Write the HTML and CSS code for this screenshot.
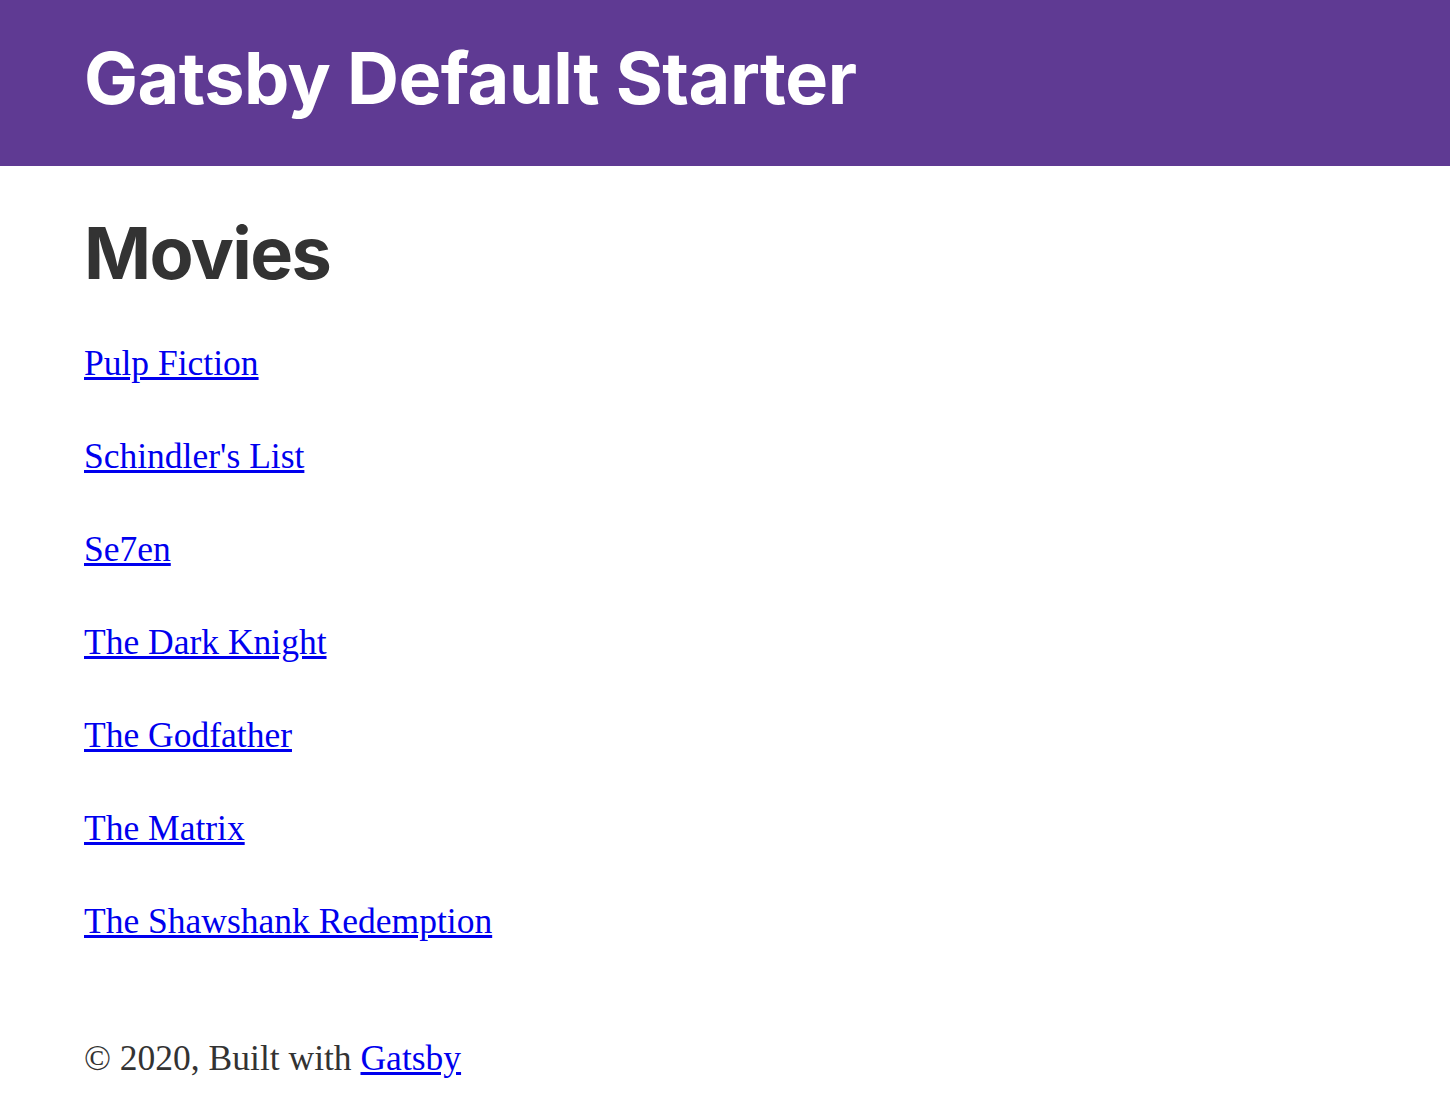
FILE: index.html
```html
<!DOCTYPE html>
<html lang="en">
<head>
<meta charset="utf-8">
<title>Gatsby Default Starter</title>
<link rel="stylesheet" href="styles.css">
</head>
<body>
<header class="site-header">
  <h1 class="site-title">Gatsby Default Starter</h1>
</header>
<div class="page">
  <main class="content">
    <h2 class="page-title">Movies</h2>
    <ul class="movie-list">
      <li class="movie"><a href="#">Pulp Fiction</a></li>
      <li class="movie"><a href="#">Schindler's List</a></li>
      <li class="movie"><a href="#">Se7en</a></li>
      <li class="movie"><a href="#">The Dark Knight</a></li>
      <li class="movie"><a href="#">The Godfather</a></li>
      <li class="movie"><a href="#">The Matrix</a></li>
      <li class="movie"><a href="#">The Shawshank Redemption</a></li>
    </ul>
  </main>
  <footer class="site-footer">© 2020, Built with <a href="#">Gatsby</a></footer>
</div>
</body>
</html>
```
FILE: styles.css
```css
html, body {
  margin: 0;
  padding: 0;
  background: #ffffff;
}
body {
  font-family: "Liberation Serif", serif;
  font-size: 35.5px;
  color: #333333;
}
a {
  color: #0000ee;
  text-decoration: underline;
}
.site-header {
  background: #5f3a93;
  height: 166px;
  box-sizing: border-box;
  padding: 42px 84px 0;
}
.site-title {
  margin: 0;
  font-family: Inter, "Liberation Sans", sans-serif;
  font-weight: 700;
  font-size: 72px;
  line-height: 72px;
  letter-spacing: -0.5px;
  color: #ffffff;
}
.page {
  padding: 51px 84px 0;
  display: flex;
  flex-direction: column;
}
.page-title {
  margin: 0;
  font-family: Inter, "Liberation Sans", sans-serif;
  font-weight: 700;
  font-size: 72px;
  line-height: 72px;
  letter-spacing: -1.6px;
  color: #333333;
}
.movie-list {
  list-style: none;
  margin: 48px 0 0;
  padding: 0;
  display: flex;
  flex-direction: column;
  gap: 41px;
}
.movie {
  line-height: 52px;
}
.site-footer {
  margin-top: 85px;
  line-height: 52px;
}
```
